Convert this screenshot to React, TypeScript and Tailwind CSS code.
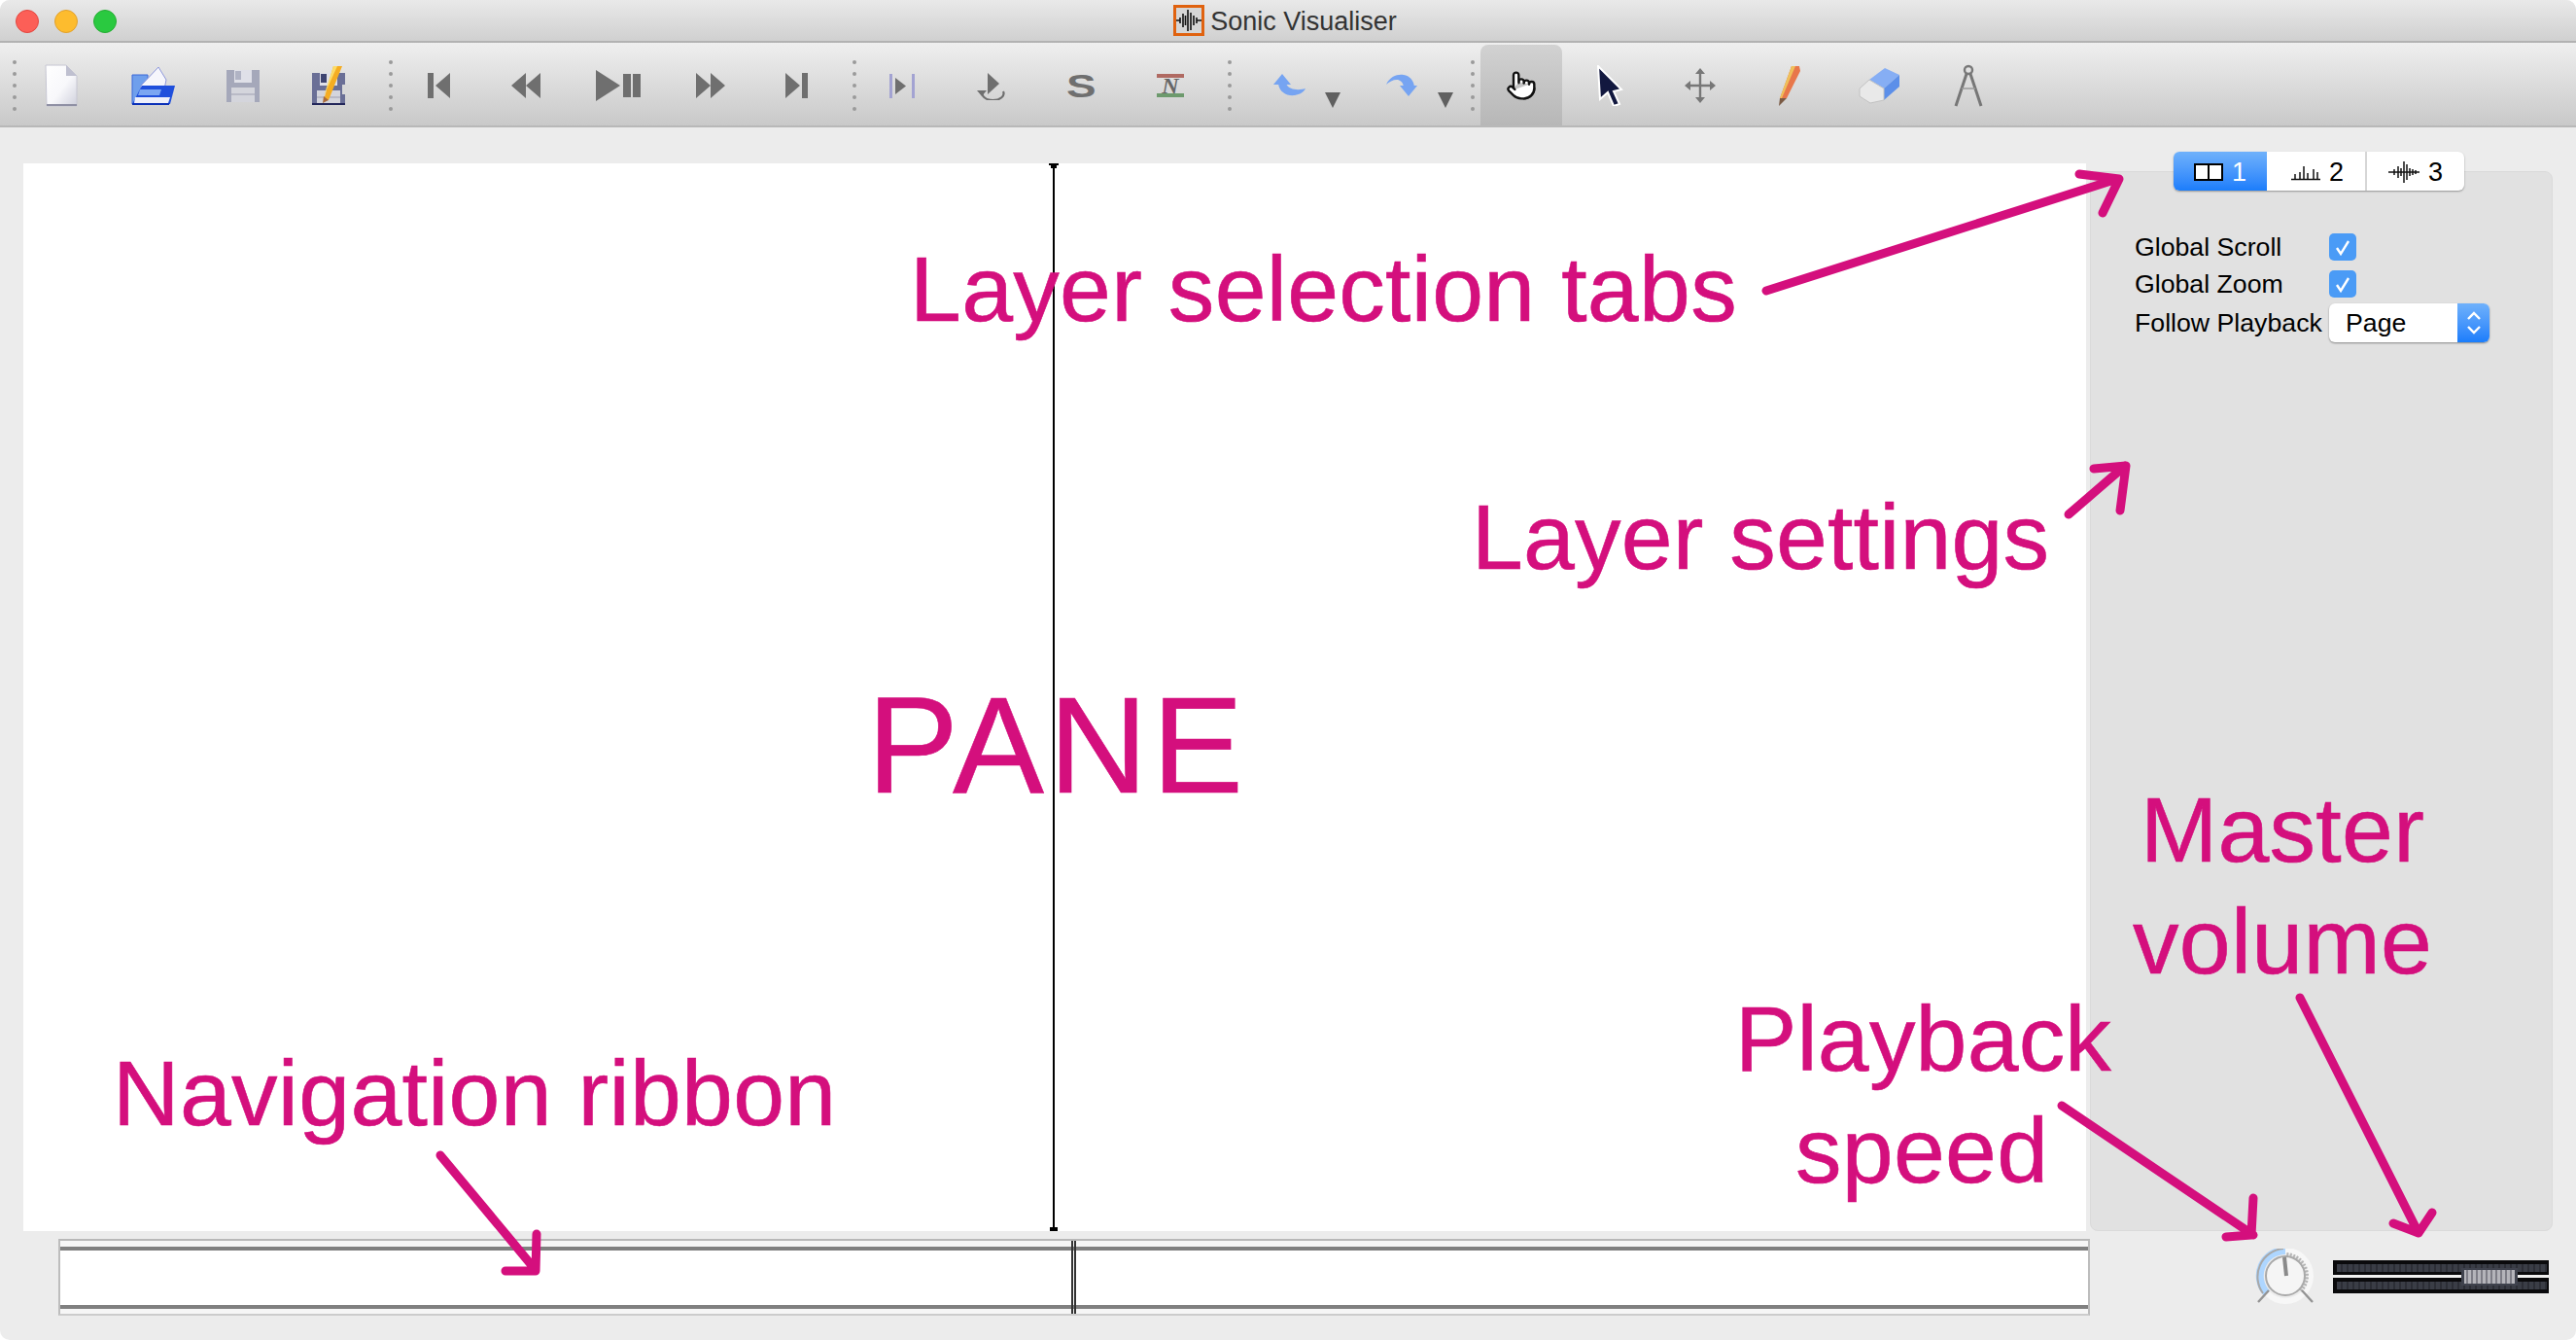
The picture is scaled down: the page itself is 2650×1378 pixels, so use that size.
import { Pointer } from 'lucide-react';
import type { ReactNode } from 'react';

const sans = "font-['Liberation_Sans',Arial,sans-serif]";

function Grip({ className }: { className: string }) {
  return (
    <div className={`flex h-full shrink-0 items-start justify-end pt-[18px] ${className}`}>
      <div className="flex flex-col gap-[8px]">
        {[0, 1, 2, 3, 4].map((i) => (
          <div key={i} className="h-[4px] w-[4px] rounded-full bg-[#9a9a9a]" />
        ))}
      </div>
    </div>
  );
}

function Tool({ children, className = 'w-[92px]' }: { children: ReactNode; className?: string }) {
  return <div className={`flex h-full shrink-0 items-center justify-center pt-[2px] ${className}`}>{children}</div>;
}

const NewIcon = () => (
  <svg width="34" height="44" viewBox="0 0 34 44">
    <defs>
      <linearGradient id="pg" x1="0" y1="0" x2="1" y2="1">
        <stop offset="0" stopColor="#ffffff" />
        <stop offset="0.55" stopColor="#f8f8fb" />
        <stop offset="1" stopColor="#cfd0dc" />
      </linearGradient>
    </defs>
    <path d="M1 1h21l11 11v31H2z" fill="url(#pg)" stroke="#c6c6d2" />
    <path d="M22 1v11h11z" fill="#bfc0d0" />
    <path d="M2 41h31v2H2z" fill="#8f90a4" />
  </svg>
);

const OpenIcon = () => (
  <svg width="46" height="40" viewBox="0 0 46 40">
    <path d="M1 9h16v30H1z" fill="#6f9fec" stroke="#3a68d8" />
    <path d="M10 20 28 1l8 13-2 10H10z" fill="#f6f6fc" stroke="#8d97dc" />
    <path d="M11 20h34l-5 19H1z" fill="#1f4fdc" />
    <path d="M9 24h22l-2 6H7z" fill="#7ba6f2" />
    <path d="M4 32h36l-2 6H3z" fill="#eef0fb" />
    <path d="M1 39h38" stroke="#0a30b8" strokeWidth="2" />
  </svg>
);

const Floppy = ({ dark }: { dark?: boolean }) => (
  <svg width="36" height="36" viewBox="0 0 36 36">
    <path d="M1 2h34v33H1z" fill={dark ? '#6a6f96' : '#a5a8ba'} />
    <path d="M9 2h18v13H9z" fill="#dfe0e8" />
    <path d="M10 3h6v9h-6z" fill={dark ? '#3e4470' : '#b0b3c4'} />
    <path d="M6 20h24v15H6z" fill="#d4d5dc" />
    <path d="M6 26h24v2H6z" fill="#b9bac6" />
    {dark && <path d="M1 33h34v2H1z" fill="#22265a" />}
  </svg>
);

const SaveAsIcon = () => (
  <div className="relative h-[42px] w-[44px]">
    <div className="absolute left-0 top-[6px]">
      <Floppy dark />
    </div>
    <svg className="absolute left-[10px] top-0" width="30" height="40" viewBox="0 0 30 40">
      <path d="M22 20h8v10h-8z" fill="#d8d8d8" />
      <path d="M13 1h9L8 36H3z" fill="#f5ad22" />
      <path d="M13 1h4L3 32z" fill="#fcdc68" />
      <path d="M3 32l5 4-6 3z" fill="#a96a3a" />
    </svg>
  </div>
);

const gray = '#6f6f6f';

const Transport = ({ w, d }: { w: number; d: string }) => (
  <svg width={w} height="32" viewBox={`0 0 ${w} 32`}>
    <path d={d} fill={gray} />
  </svg>
);

const LoopIcon = () => (
  <svg width="28" height="28" viewBox="0 0 28 28">
    <path d="M1 2h3v25H1zM24 2h3v25h-3z" fill="#a3a3d2" />
    <path d="M7 6l11 8.5L7 23z" fill={gray} />
  </svg>
);

const SelectionPlayIcon = () => (
  <svg width="32" height="30" viewBox="0 0 32 30">
    <path d="M12 2l12 11-12 11z" fill={gray} />
    <path d="M7 21a11 7 0 1 0 21 0" fill="none" stroke={gray} strokeWidth="2.2" />
    <path d="M1 20h10l-5 6z" fill={gray} />
  </svg>
);

const UndoIcon = () => (
  <svg width="34" height="24" viewBox="0 0 34 24">
    <path d="M9 0l9 11H0z" fill="#76a4f2" />
    <path d="M5 10C6 19 14 23 22 22 27 21 31 19 33 15 27 17 16 17 13 10z" fill="#76a4f2" />
  </svg>
);

const RedoIcon = () => (
  <svg width="34" height="24" viewBox="0 0 34 24">
    <path d="M14 12h18l-9 11z" fill="#76a4f2" />
    <path d="M0 11C4 2 12 0 18 1 24 2 28 6 29 13H18C17 8 14 6 11 6 7 6 3 8 0 11z" fill="#76a4f2" />
  </svg>
);

const Caret = () => (
  <svg className="mt-[30px] ml-[19px]" width="16" height="16" viewBox="0 0 16 16">
    <path d="M0 0h16L8 16z" fill="#606060" />
  </svg>
);

const ArrowIcon = () => (
  <svg width="30" height="42" viewBox="0 0 30 42">
    <path d="M2 1l24 24-8 2 6 13-6 2-6-14-8 7z" fill="#12183f" stroke="#ffffff" strokeWidth="2" />
  </svg>
);

const MoveIcon = () => (
  <svg width="32" height="36" viewBox="0 0 32 36" fill="none">
    <path d="M16 4v28M3 18h26" stroke="#777777" strokeWidth="2.4" />
    <path d="M16 0l5 6H11zM16 36l-5-6h10zM0 18l6-5v10zM32 18l-6 5V13z" fill="#777777" />
  </svg>
);

const PencilIcon = () => (
  <svg width="24" height="42" viewBox="0 0 24 42">
    <path d="M14 1h8l1 5-14 28H2z" fill="#e8774a" />
    <path d="M14 1h4L4 34H2z" fill="#efc05a" />
    <path d="M2 34h7l-8 8z" fill="#7a5a44" />
  </svg>
);

const EraserIcon = () => (
  <svg width="44" height="38" viewBox="0 0 44 38">
    <path d="M12 13 28 1l15 7-16 14z" fill="#86aef4" />
    <path d="M27 22 43 8v12L27 34z" fill="#5c8fe9" />
    <path d="M2 22l10-9 15 9v12l-14 3-11-7z" fill="#e9e9e9" stroke="#c2c2c2" />
  </svg>
);

const CompassIcon = () => (
  <svg width="30" height="44" viewBox="0 0 30 44" fill="none">
    <circle cx="15" cy="6" r="4" stroke="#787878" strokeWidth="2.4" />
    <path d="M13 10 2 43M17 10l11 33" stroke="#777777" strokeWidth="3" />
    <path d="M8 25h14" stroke="#9a9a9a" strokeWidth="1.5" />
  </svg>
);

function AppLogo() {
  return (
    <svg className="mr-[6px]" width="32" height="32" viewBox="0 0 32 32">
      <rect x="1.5" y="1.5" width="29" height="29" fill="#d6d6d6" stroke="#e0620f" strokeWidth="3" />
      <path
        d="M3 16h4M7 13v6M10 9v14M12.5 11v10M15 5v22M18 8v18M21 11v10M24 13v6M24 16h5"
        stroke="#111111"
        strokeWidth="1.6"
      />
    </svg>
  );
}

function TitleBar() {
  return (
    <div className="relative flex h-[44px] shrink-0 items-center justify-center border-b-2 border-[#b2b2b2] bg-gradient-to-b from-[#e9e9e9] to-[#d0d0d0] pr-[6px]">
      <div className="absolute left-[16px] top-[10px] flex gap-[16px]">
        <div className="h-[24px] w-[24px] rounded-full border border-[#e2463f] bg-[#fc5f57]" />
        <div className="h-[24px] w-[24px] rounded-full border border-[#e1a02c] bg-[#fdbc2e]" />
        <div className="h-[24px] w-[24px] rounded-full border border-[#26ac33] bg-[#2ac940]" />
      </div>
      <AppLogo />
      <span className={`${sans} pt-[2px] text-[27px] leading-none text-[#333333]`}>Sonic Visualiser</span>
    </div>
  );
}

function Toolbar() {
  return (
    <div className="flex h-[87px] shrink-0 border-b-2 border-[#b8b8b8] bg-gradient-to-b from-[#efefef] to-[#c9c9c9]">
      <Grip className="w-[17px]" />
      <Tool><NewIcon /></Tool>
      <Tool><div className="ml-[6px]"><OpenIcon /></div></Tool>
      <Tool><div className="ml-[6px]"><Floppy /></div></Tool>
      <Tool><div className="ml-[6px]"><SaveAsIcon /></div></Tool>
      <Grip className="w-[21px] pr-[2px]" />
      <Tool><Transport w={24} d="M0 3h6v26H0zM23 3v26L8 16z" /></Tool>
      <Tool><div className="-ml-[6px]"><Transport w={30} d="M15 3v26L0 16zM30 3v26L15 16z" /></div></Tool>
      <Tool><Transport w={46} d="M0 0l25 16L0 32zM28 4h8v24h-8zM38 4h8v24h-8z" /></Tool>
      <Tool><div className="ml-[6px]"><Transport w={30} d="M0 3l15 13L0 29zM15 3l15 13-15 13z" /></div></Tool>
      <Tool><Transport w={24} d="M0 3l15 13L0 29zM17 3h6v26h-6z" /></Tool>
      <Grip className="w-[16px] pr-[1px]" />
      <Tool><LoopIcon /></Tool>
      <Tool><SelectionPlayIcon /></Tool>
      <Tool>
        <span className={`${sans} scale-x-[1.35] text-[34px] font-bold leading-none text-[#6f6f6f]`}>S</span>
      </Tool>
      <Tool>
        <div className="flex h-[24px] w-[28px] flex-col items-center justify-between overflow-hidden">
          <div className="h-[4px] w-full shrink-0 bg-[#b06a62]" />
          <span className="font-['Liberation_Serif',serif] text-[24px] font-bold italic leading-[16px] text-[#666666]">N</span>
          <div className="h-[4px] w-full shrink-0 bg-[#6d9a6d]" />
        </div>
      </Tool>
      <Grip className="w-[19px] pr-[2px]" />
      <div className="flex h-full w-[116px] shrink-0 items-center pl-[41px] pt-[2px]">
        <UndoIcon />
        <Caret />
      </div>
      <div className="flex h-full w-[116px] shrink-0 items-center pl-[41px] pt-[2px]">
        <RedoIcon />
        <Caret />
      </div>
      <Grip className="w-[18px] pr-[2px]" />
      <div className="flex h-full w-[92px] shrink-0 justify-center pt-[2px]">
        <div className="flex h-full w-[84px] items-center justify-center rounded-t-[8px] bg-gradient-to-b from-[#d2d2d2] to-[#b7b7b7]">
          <Pointer size={32} fill="#ffffff" stroke="#111111" strokeWidth={1.8} />
        </div>
      </div>
      <Tool><ArrowIcon /></Tool>
      <Tool><MoveIcon /></Tool>
      <Tool><PencilIcon /></Tool>
      <Tool><EraserIcon /></Tool>
      <Tool><CompassIcon /></Tool>
    </div>
  );
}

function Pane() {
  return (
    <div className="relative w-[2122px] shrink-0 bg-white">
      <div className="absolute inset-y-0 left-[1059px] w-[2px] bg-black" />
      <div className="absolute left-[1055px] top-0 h-[2px] w-[10px] bg-black" />
      <div className="absolute left-[1057px] top-[2px] h-[3px] w-[6px] bg-black" />
      <div className="absolute bottom-0 left-[1056px] h-[4px] w-[8px] bg-black" />
    </div>
  );
}

function Check() {
  return (
    <div className="flex h-[28px] w-[28px] items-center justify-center rounded-[5px] bg-[#4a9bf6]">
      <svg width="18" height="18" viewBox="0 0 18 18" fill="none">
        <path d="M3 10l4 6 8-13" stroke="#ffffff" strokeWidth="2.4" />
      </svg>
    </div>
  );
}

function Tabs() {
  return (
    <div className={`${sans} flex h-[40px] w-[299px] overflow-hidden rounded-[6px] bg-white pt-0 text-[27px] leading-none text-black shadow-[0_1px_2px_rgba(0,0,0,0.35)]`}>
      <div className="flex w-[96px] items-center gap-[9px] bg-gradient-to-b from-[#6fb1fb] to-[#1a7dfb] pl-[21px] pt-[2px] text-white">
        <svg width="30" height="18" viewBox="0 0 30 18" fill="none">
          <path d="M1 1h28v16H1zM15 1v16" fill="#ffffff" stroke="#000000" strokeWidth="2" />
        </svg>
        1
      </div>
      <div className="flex w-[103px] items-center gap-[9px] border-r-2 border-[#d6d6d6] pl-[25px] pt-[2px]">
        <svg width="30" height="18" viewBox="0 0 30 18" fill="none">
          <path d="M0 16.5h30M4 16V11M9 16V9M13 16V3M17 16V10M23 16V6M27 16V9" stroke="#111111" strokeWidth="1.5" />
        </svg>
        2
      </div>
      <div className="flex flex-1 items-center gap-[9px] pl-[22px] pt-[2px]">
        <svg width="32" height="22" viewBox="0 0 32 22" fill="none">
          <path d="M0 11h32M6 8v6M10 5v12M13 7v8M16 0v22M19 3v16M22 7v8M25 8v6M28 9v4" stroke="#111111" strokeWidth="1.5" />
        </svg>
        3
      </div>
    </div>
  );
}

function SidePanel() {
  return (
    <div className="mt-[8px] ml-[4px] flex-1 rounded-[8px] border border-[#dadada] bg-[#e1e1e1]">
      <div className="-mt-[21px] pl-[85px]">
        <Tabs />
      </div>
      <div className={`${sans} mt-[44px] pl-[45px] text-[26.7px] leading-none text-black`}>
        <div className="flex h-[28px] items-center">
          <span className="w-[200px]">Global Scroll</span>
          <Check />
        </div>
        <div className="mt-[10px] flex h-[28px] items-center">
          <span className="w-[200px]">Global Zoom</span>
          <Check />
        </div>
        <div className="mt-[6px] flex h-[40px] items-center">
          <span className="w-[200px] whitespace-nowrap">Follow Playback</span>
          <div className="flex h-[40px] w-[165px] items-center overflow-hidden rounded-[6px] bg-white pl-[17px] shadow-[0_1px_2px_rgba(0,0,0,0.4)]">
            <span className="flex-1">Page</span>
            <div className="flex h-full w-[33px] items-center justify-center bg-gradient-to-b from-[#6fb1fb] to-[#1a7dfb]">
              <svg width="18" height="28" viewBox="0 0 18 28" fill="none">
                <path d="M3 10l6-6 6 6M3 18l6 6 6-6" stroke="#ffffff" strokeWidth="2.4" />
              </svg>
            </div>
          </div>
        </div>
      </div>
    </div>
  );
}

function NavRibbon() {
  return (
    <div className="relative ml-[36px] flex h-[79px] w-[2090px] shrink-0 flex-col border-x-2 border-t-2 border-b-2 border-x-[#bdbdbd] border-t-[#b8b8b8] border-b-[#cccccc] bg-white">
      <div className="h-[6px] bg-[#f6f6f6]" />
      <div className="h-[4px] bg-[#808080]" />
      <div className="flex-1" />
      <div className="h-[4px] bg-[#808080]" />
      <div className="h-[5px] bg-[#f6f6f6]" />
      <div className="absolute inset-y-0 left-[1040px] w-[5px] border-x-2 border-[#333333]" />
    </div>
  );
}

function Knob() {
  const ticks = Array.from({ length: 15 }, (_, i) => i);
  return (
    <svg width="64" height="62" viewBox="0 0 64 62" fill="none">
      <circle cx="32" cy="28" r="26" stroke="#f7f7f7" strokeWidth="6" />
      <path d="M32 2A26 26 0 0 0 13 46" stroke="#aed6ff" strokeWidth="8" />
      <path d="M30 0A29 29 0 0 0 9 46" stroke="#a8a8a8" strokeWidth="2" />
      {ticks.map((i) => (
        <path
          key={i}
          d="M32 4v6"
          stroke="#b5b5b5"
          strokeWidth="2"
          transform={`rotate(${6 + i * 9} 32 28)`}
        />
      ))}
      <circle cx="32" cy="28" r="20" fill="#f5f5f5" stroke="#a9a9a9" strokeWidth="2" />
      <path d="M31 9l2 19" stroke="#8a8a8a" strokeWidth="4" />
      <path d="M15 43 4 55M49 43l11 12" stroke="#949494" strokeWidth="2.4" />
    </svg>
  );
}

function Fader() {
  const cells = Array.from({ length: 36 }, (_, i) => i);
  const grips = Array.from({ length: 10 }, (_, i) => i);
  return (
    <svg width="222" height="34" viewBox="0 0 222 34">
      <rect width="222" height="34" fill="#0a0a0c" />
      <rect y="15" width="222" height="3" fill="#f0f0f0" />
      <rect x="4" y="4" width="214" height="8" fill="#3a3d46" />
      <rect x="4" y="22" width="214" height="8" fill="#3a3d46" />
      {cells.map((i) => (
        <g key={i}>
          <rect x={8 + i * 6} y="4" width="2" height="8" fill="#2c2e36" />
          <rect x={8 + i * 6} y="22" width="2" height="8" fill="#2c2e36" />
        </g>
      ))}
      <rect x="132" y="8" width="58" height="18" fill="#3f424d" />
      <rect x="135" y="10" width="52" height="14" fill="#b4b4ba" />
      {grips.map((i) => (
        <rect key={i} x={137 + i * 5} y="10" width="2" height="14" fill="#7d7d86" />
      ))}
    </svg>
  );
}

const label = `${sans} absolute whitespace-nowrap leading-none text-[#d40f7d] [-webkit-text-stroke:0.6px_#d40f7d]`;

const arrows = [
  'M1817 299 2178 184M2139 179l41 5-17 35',
  'M2128 529 2186 479M2154 482l33-3-6 46',
  'M453 1188 551 1306M552 1269l-1 38-31 0',
  'M2121 1137 2318 1270M2318 1232l-2 38-26 2',
  'M2366 1026 2488 1268M2502 1247l-14 21-26-10',
];

function Annotations() {
  return (
    <>
      <div className={`${label} left-[936px] top-[250px] text-[95px] tracking-[0.3px]`}>Layer selection tabs</div>
      <div className={`${label} left-[1514px] top-[505px] text-[95px] tracking-[0.2px]`}>Layer settings</div>
      <div className={`${label} left-[892px] top-[696px] text-[141px] tracking-[4.5px]`}>PANE</div>
      <div className={`${label} left-[116px] top-[1077px] text-[95px] tracking-[0.3px]`}>Navigation ribbon</div>
      <div className={`${label} left-[1785px] top-[1021px] text-[95px] tracking-[0.2px]`}>Playback</div>
      <div className={`${label} left-[1847px] top-[1136px] text-[95px] tracking-[0.3px]`}>speed</div>
      <div className={`${label} left-[2202px] top-[806px] text-[95px] tracking-[0.3px]`}>Master</div>
      <div className={`${label} left-[2194px] top-[921px] text-[95px] tracking-[0.3px]`}>volume</div>
      <svg className="pointer-events-none absolute inset-0" width="2650" height="1378" fill="none">
        {arrows.map((d) => (
          <path key={d} d={d} stroke="#d40f7d" strokeWidth="9" strokeLinecap="round" strokeLinejoin="round" />
        ))}
      </svg>
    </>
  );
}

export default function App() {
  return (
    <div className="relative flex h-[1378px] w-[2650px] flex-col overflow-hidden rounded-[10px] bg-[#ececec]">
      <TitleBar />
      <Toolbar />
      <div className="flex flex-1 flex-col pl-[24px] pr-[24px] pt-[37px]">
        <div className="flex h-[1098px] shrink-0">
          <Pane />
          <SidePanel />
        </div>
        <div className="mt-[8px] flex items-start">
          <NavRibbon />
          <div className="ml-[169px] mt-[10px]">
            <Knob />
          </div>
          <div className="ml-[17px] mt-[22px]">
            <Fader />
          </div>
        </div>
      </div>
      <Annotations />
    </div>
  );
}
